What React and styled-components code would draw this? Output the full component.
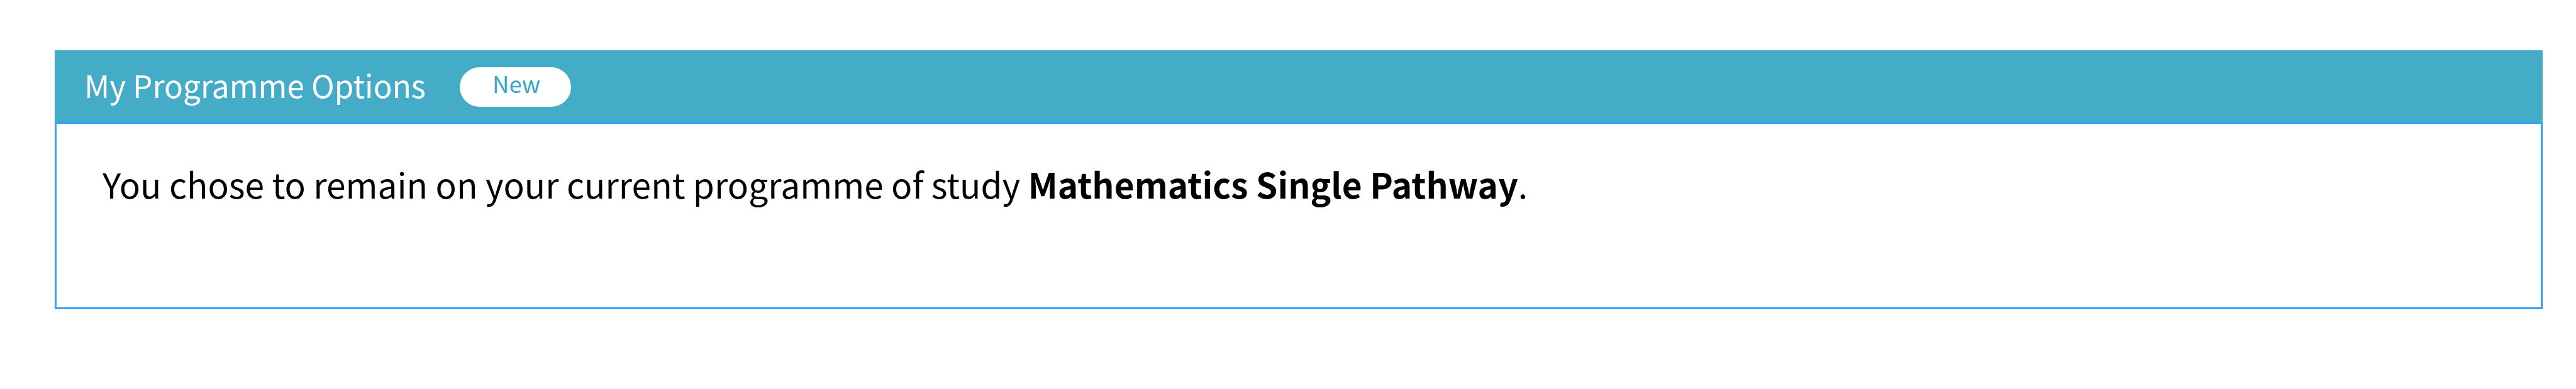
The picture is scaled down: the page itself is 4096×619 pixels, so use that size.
import styled, { createGlobalStyle } from 'styled-components'

const colors = {
  teal: '#44acc6',
  border: '#34a1f8',
  badgeText: '#36a6c2',
}

const App = () => {
  return (
    <Page>
      <GlobalStyle />
      <Panel>
        <PanelHeader>
          <Title>My Programme Options</Title>
          <Badge>New</Badge>
        </PanelHeader>
        <PanelBody>
          <Message>
            You chose to remain on your current programme of study{' '}
            <Programme>Mathematics Single Pathway</Programme>.
          </Message>
        </PanelBody>
      </Panel>
    </Page>
  )
}

export default App

const GlobalStyle = createGlobalStyle`
  body {
    margin: 0;
    background: #fff;
    font-family: 'Noto Sans CJK SC', 'Noto Sans', sans-serif;
  }
`
const Page = styled.main`
  box-sizing: border-box;
  height: 619px;
  padding: 80px 53px 127px 87px;
`
const Panel = styled.section`
  display: flex;
  flex-direction: column;
  height: 100%;
`
const PanelHeader = styled.header`
  display: flex;
  align-items: flex-start;
  box-sizing: border-box;
  height: 114px;
  padding: 27px 0 0 47px;
  background: ${colors.teal};
`
const Title = styled.h1`
  width: 597px;
  margin: 0;
  color: #fff;
  font-size: 49.5px;
  font-weight: 400;
  line-height: 56px;
  white-space: nowrap;
`
const Badge = styled.span`
  box-sizing: border-box;
  width: 177px;
  height: 63px;
  padding-left: 52px;
  border-radius: 32px;
  background: #fff;
  color: ${colors.badgeText};
  font-size: 36.5px;
  line-height: 51px;
`
const PanelBody = styled.div`
  flex: 1;
  box-sizing: border-box;
  padding: 55px 73px;
  border: 3px solid ${colors.border};
`
const Message = styled.p`
  margin: 0;
  color: #000;
  font-size: 55.1px;
  line-height: 81px;
  white-space: nowrap;
`
const Programme = styled.strong`
  font-weight: 700;
`
